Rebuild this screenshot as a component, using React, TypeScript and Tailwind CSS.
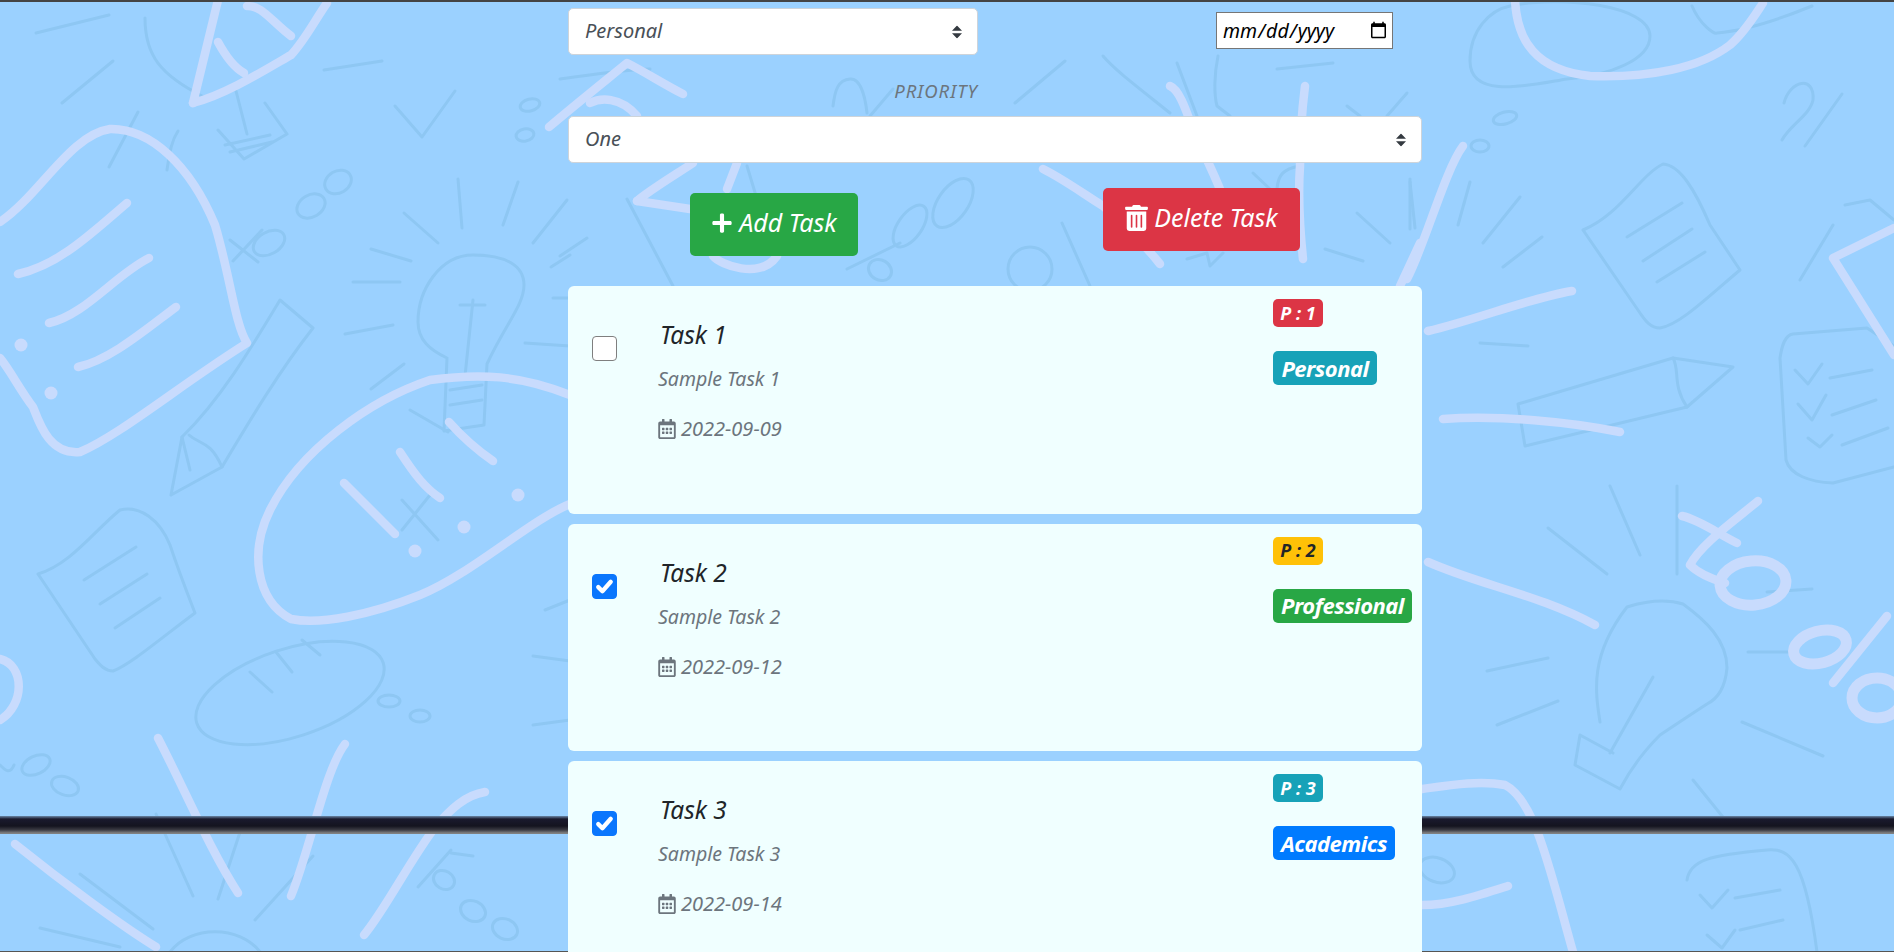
import React from "react";
import { FaPlus, FaTrashAlt, FaRegCalendarAlt } from "react-icons/fa";

const thick = [
  "M0 222 C40 195 70 135 110 129 C150 128 190 165 215 225 C230 275 235 325 247 343 C180 385 120 435 80 452 C50 455 40 425 33 407 C20 390 10 370 0 358",
  "M18 274 C60 265 95 230 127 203", "M49 323 C85 315 115 275 149 258", "M78 367 C110 360 145 330 176 307",
  "M193 103 L218 0", "M193 103 C225 95 265 70 291 55 C305 40 315 20 327 3", "M218 42 C225 55 235 68 244 73", "M247 6 C262 5 272 22 291 36",
  "M570 395 C520 375 480 373 430 380 C370 400 300 450 270 510 C250 550 255 600 291 619 C320 625 370 615 420 595 C470 575 530 520 570 504",
  "M344 483 L395 534", "M400 452 C415 475 425 488 440 498", "M449 422 C465 440 480 452 493 461",
  "M0 659 C25 665 25 705 0 720",
  "M158 738 C185 790 210 850 238 893", "M345 744 C325 770 310 850 291 896", "M485 792 C465 795 450 810 436 826 C410 860 385 910 364 935", "M15 844 C60 880 120 925 156 947",
  "M549 127 C575 105 600 85 627 63 C645 72 665 85 683 94", "M590 103 C600 98 620 96 637 116", "M637 201 C650 190 675 175 693 163", "M637 201 L690 209", "M737 163 L727 189", "M713 256 C720 265 760 280 777 256",
  "M1043 169 C1065 180 1085 195 1103 206 C1125 225 1145 245 1160 264",
  "M1170 86 C1180 90 1187 113 1195 135 C1205 155 1212 170 1220 189", "M1305 86 C1302 110 1300 140 1300 166 C1298 195 1300 230 1303 259", "M1420 243 L1400 286",
  "M1515 0 C1517 40 1535 70 1590 76 C1650 78 1700 68 1730 45 C1745 32 1755 15 1763 3",
  "M1463 146 C1445 170 1425 245 1407 279", "M1428 331 C1475 320 1530 298 1572 291", "M1443 419 C1500 415 1570 422 1620 432", "M1428 562 C1480 585 1540 595 1595 625",
  "M1682 516 C1700 520 1720 535 1737 543", "M1758 501 C1735 520 1700 545 1690 565 C1700 575 1715 580 1725 583",
  "M1894 228 L1833 258 L1894 355", "M1887 616 L1833 683",
  "M1422 789 C1450 785 1480 780 1505 785 C1535 800 1550 870 1573 952", "M1422 905 C1450 905 1480 895 1508 886",
];
const thickEllipses = [
  [1753, 583, 33, 22, -5], [1820, 647, 27, 16, -15], [1877, 698, 25, 20, 0],
];
const dots = [[21, 345], [51, 393], [415, 551], [464, 527], [518, 495]];
const thin = [
  "M145 18 C145 55 160 75 204 97", "M218 130 L244 159 L287 134 L265 103", "M236 91 L247 134", "M225 145 L270 135", "M230 152 L272 142",
  "M395 106 L422 137 L455 91", "M324 70 L382 61", "M36 33 L109 15", "M62 103 L113 61", "M109 167 L138 112", "M167 170 C170 150 172 140 178 131",
  "M233 261 L262 230", "M230 240 L258 262",
  "M171 495 L182 437 C220 400 250 350 280 300 L313 328 C280 370 250 420 222 467 L171 495", "M189 435 C200 445 210 440 222 467", "M182 437 L190 470",
  "M447 358 C430 350 418 340 418 322 C418 290 440 255 473 255 C505 255 524 265 524 285 C524 305 505 325 487 364 L484 425 L444 431 L447 358",
  "M473 300 L465 376", "M460 305 L485 305", "M450 390 L482 385", "M450 405 L482 400",
  "M458 179 L462 228", "M518 182 L503 225", "M404 213 L438 243", "M371 249 L411 261", "M353 282 L400 282", "M345 334 L393 325", "M371 389 L404 364",
  "M533 243 L567 200", "M551 267 L570 255", "M553 298 L570 298", "M525 343 L570 346",
  "M38 574 C70 565 95 530 120 510 C140 505 160 520 170 545 C180 575 190 600 195 613 C165 635 130 665 113 671 C105 671 100 665 95 659 Z",
  "M84 580 L136 547", "M100 604 L147 574", "M115 628 L160 598",
  "M156 814 L193 896", "M255 920 L313 856", "M218 899 L244 820", "M80 874 L153 929", "M40 928 L120 947", "M170 952 C190 925 240 925 260 952",
  "M418 887 L451 850", "M451 853 L473 856",
  "M533 656 L570 661", "M533 725 L570 720", "M545 610 L570 600",
  "M0 765 C5 770 10 775 14 765",
  "M560 79 C590 75 620 70 650 69", "M833 106 C835 90 838 80 850 79 C860 78 865 95 867 113", "M893 89 L870 116",
  "M627 199 L673 286", "M747 166 L760 209", "M560 256 L587 238", "M847 269 L900 243",
  "M1015 103 L1065 61", "M1103 56 C1115 70 1135 85 1170 113", "M1333 63 L1277 69", "M1177 63 L1197 116", "M1218 56 C1214 75 1214 95 1217 106 L1230 116",
  "M1407 93 L1387 116", "M1347 106 L1360 116", "M1253 173 L1270 189", "M1277 189 C1278 175 1283 169 1300 166", "M1357 213 L1390 243", "M1325 249 L1363 261", "M1410 179 L1410 229",
  "M1062 223 L1090 286", "M1187 259 L1207 253 L1210 266 L1223 253",
  "M1470 61 C1470 30 1490 10 1510 6 C1560 -5 1650 5 1650 36 C1650 60 1610 75 1567 79 C1530 85 1470 100 1470 61",
  "M1692 6 C1700 25 1715 35 1717 33 C1750 30 1790 15 1812 6", "M1784 103 C1790 80 1815 75 1813 100 C1810 115 1790 125 1782 140", "M1842 94 L1805 146",
  "M1583 230 C1620 215 1640 175 1663 164 C1680 165 1695 190 1710 225 L1740 270 C1710 295 1680 325 1660 328 C1650 328 1645 320 1640 313 Z",
  "M1627 237 L1682 203", "M1643 261 L1692 229", "M1657 282 L1705 252",
  "M1518 404 L1673 358 L1733 367 L1687 407 L1525 446 L1518 404", "M1673 358 C1680 370 1672 385 1687 407",
  "M1780 358 C1782 345 1785 335 1793 334 L1867 328 L1894 346 M1780 358 L1786 460 C1790 475 1810 482 1833 483 L1894 467",
  "M1795 370 L1808 384 L1822 364", "M1798 404 L1812 420 L1826 395", "M1808 438 L1820 447 L1832 435", "M1830 378 L1872 370", "M1832 415 L1876 400", "M1842 445 L1888 428",
  "M1800 280 L1833 225", "M1845 205 L1870 200 L1894 220",
  "M1600 722 C1595 690 1590 655 1627 607 C1650 600 1670 600 1683 604 C1705 620 1727 640 1727 668 C1725 690 1715 700 1707 704 C1690 715 1675 725 1660 735 C1645 750 1630 770 1620 789 L1575 765 L1580 735 L1613 753",
  "M1653 677 L1610 753",
  "M1610 486 L1640 555", "M1677 486 L1677 574", "M1548 528 L1607 574", "M1487 671 L1548 658", "M1497 725 L1558 701", "M1748 652 L1793 652", "M1742 722 L1823 756", "M1693 780 L1735 832", "M1767 592 L1812 589",
  "M1410 182 L1415 228", "M1470 182 L1458 225", "M1520 197 L1483 243", "M1542 237 L1503 267", "M1480 343 L1528 346",
  "M1687 880 C1690 860 1710 855 1767 850 C1790 848 1805 860 1817 952", "M1700 895 L1712 908 L1728 890", "M1735 898 L1780 890", "M1707 935 L1722 948 L1735 930", "M1740 930 L1783 920",
];
const thinEllipses = [
  [269, 243, 17, 11, -30], [311, 206, 15, 11, -30], [338, 182, 14, 11, -30],
  [290, 693, 98, 44, -18], [389, 701, 11, 6, 0], [420, 716, 10, 6, 0],
  [36, 765, 15, 9, -25], [65, 786, 14, 9, 20], [444, 880, 11, 9, 30], [473, 911, 13, 10, 25], [505, 929, 13, 10, 25],
  [953, 203, 15, 28, 35], [910, 226, 12, 24, 35], [880, 270, 12, 10, 30], [1030, 269, 22, 22, 0], [1505, 118, 12, 6, -15], [1480, 146, 9, 6, 0], [530, 105, 10, 6, -15], [525, 135, 9, 6, -10], [1437, 870, 18, 12, 20],
];
const thinDotted = [
  "M410 410 L448 432", "M402 500 L438 540 M434 490 L402 530", "M250 672 L272 692", "M276 652 L292 672", "M302 640 L320 655",
];

function Background() {
  return (
    <svg className="absolute inset-0 w-full h-full blur-[0.7px]" viewBox="0 0 1894 952" fill="none" strokeLinecap="round" strokeLinejoin="round">
      <g stroke="#8ec7f3" strokeWidth="3">
        {thin.concat(thinDotted).map((d, i) => <path key={i} d={d} />)}
        {thinEllipses.map(([x, y, rx, ry, r], i) => <ellipse key={i} cx={x} cy={y} rx={rx} ry={ry} transform={`rotate(${r} ${x} ${y})`} />)}
      </g>
      <g stroke="#c8dbfd" strokeWidth="8.5">
        {thick.map((d, i) => <path key={i} d={d} />)}
        {thickEllipses.map(([x, y, rx, ry, r], i) => <ellipse key={i} cx={x} cy={y} rx={rx} ry={ry} strokeWidth={11} transform={`rotate(${r} ${x} ${y})`} />)}
      </g>
      <g fill="#c8dbfd">
        {dots.map(([x, y], i) => <circle key={i} cx={x} cy={y} r="6.5" />)}
      </g>
    </svg>
  );
}

function Arrows() {
  return (
    <svg className="absolute right-[16px] top-1/2 -translate-y-1/2 w-[10px] h-[13px] pointer-events-none" viewBox="0 0 4 5" preserveAspectRatio="none">
      <path fill="#343a40" d="M2 0L0 2h4zm0 5L0 3h4z" />
    </svg>
  );
}

function Select({ value, widthClass }: { value: string; widthClass: string }) {
  return (
    <div className={`relative ${widthClass}`}>
      <select
        defaultValue={value}
        className="block w-full h-[47px] appearance-none bg-white border border-[#ced4da] rounded-[5px] pl-[16px] pb-[2px] text-[20px] italic text-[#495057] [font-family:'Noto_Sans',sans-serif]"
      >
        <option>{value}</option>
      </select>
      <Arrows />
    </div>
  );
}

type Task = { title: string; sub: string; date: string; checked: boolean; p: string; pCls: string; cat: string; catCls: string; catW: string };

const tasks: Task[] = [
  { title: "Task 1", sub: "Sample Task 1", date: "2022-09-09", checked: false, p: "P : 1", pCls: "bg-[#dc3545] text-white", cat: "Personal", catCls: "bg-[#17a2b8]", catW: "w-[104px]" },
  { title: "Task 2", sub: "Sample Task 2", date: "2022-09-12", checked: true, p: "P : 2", pCls: "bg-[#ffc107] text-[#212529]", cat: "Professional", catCls: "bg-[#28a745]", catW: "w-[139px]" },
  { title: "Task 3", sub: "Sample Task 3", date: "2022-09-14", checked: true, p: "P : 3", pCls: "bg-[#17a2b8] text-white", cat: "Academics", catCls: "bg-[#007bff]", catW: "w-[122px]" },
];

function TaskCard({ t }: { t: Task }) {
  return (
    <div className="flex shrink-0 h-[227.5px] bg-[#f0ffff] rounded-[6px] [font-family:'Noto_Sans',sans-serif] italic">
      <div className="relative ml-[24px] mt-[50px] w-[25px] h-[25px] shrink-0">
        <input
          type="checkbox"
          readOnly
          checked={t.checked}
          className="block appearance-none w-[25px] h-[25px] rounded-[4px] bg-white border border-[#7f7f7f] checked:bg-[#0a76fd] checked:border-[#0a76fd]"
        />
        {t.checked && (
          <svg className="absolute inset-0 w-[25px] h-[25px] pointer-events-none" viewBox="0 0 20 20" fill="none">
            <path d="M5 10.5l3.3 3.3 6.7-7.6" stroke="#fff" strokeWidth="3.4" strokeLinecap="round" strokeLinejoin="round" />
          </svg>
        )}
      </div>
      <div className="ml-[41px] flex-1 pt-[32px]">
        <div className="ml-[2px] text-[24.5px] leading-[34px] text-[#212529]">{t.title}</div>
        <div className="mt-[14px] text-[19.5px] leading-[26px] text-[#6c757d]">{t.sub}</div>
        <div className="mt-[24px] flex items-center text-[20px] leading-[26px] text-[#6c757d]">
          <FaRegCalendarAlt className="w-[18px] h-[20px] mr-[5px] not-italic" />
          <span>{t.date}</span>
        </div>
      </div>
      <div className="w-[149px] shrink-0 pt-[13px] flex flex-col items-start font-bold">
        <span className={`flex items-center justify-center w-[50px] h-[28px] rounded-[5px] text-[18px] ${t.pCls}`}>{t.p}</span>
        <span className={`mt-[24px] flex items-center justify-center h-[34px] rounded-[5px] text-[22px] tracking-[-0.5px] text-white ${t.catW} ${t.catCls}`}>{t.cat}</span>
      </div>
    </div>
  );
}

export default function App() {
  return (
    <div className="relative w-full h-[952px] overflow-hidden bg-[#9bd1ff]">
      <Background />
      <div className="absolute left-0 right-0 top-[816px] h-[18px] bg-[linear-gradient(to_bottom,#6a88a8_0px,#1a1a2e_3px,#14141f_10px,#3c3c44_14px,#808080_17px,#808080_18px)]" />
      <div className="absolute left-0 right-0 top-0 h-[2px] bg-[#444444]" />
      <div className="absolute left-0 right-0 bottom-0 h-[1px] bg-[#555555]" />
      <div className="relative ml-[568px] w-[854px] pt-[8px] flex flex-col">
        <div className="flex items-start">
          <Select value="Personal" widthClass="w-[410px]" />
          <input
            type="date"
            className="ml-[238px] mt-[4px] w-[177px] h-[37px] bg-white border border-[#767676] pl-[5px] pr-[2px] text-[19.5px] italic text-black [font-family:'Noto_Sans',sans-serif]"
          />
        </div>
        <div className="mt-[24px] w-[736px] text-center text-[18.5px] leading-[24px] tracking-[1px] italic text-[#6c757d] [font-family:'Noto_Sans',sans-serif]">PRIORITY</div>
        <div className="mt-[13px]"><Select value="One" widthClass="w-[854px]" /></div>
        <div className="flex items-start [font-family:'Noto_Sans',sans-serif] italic text-white text-[25px]">
          <button className="ml-[122px] mt-[30px] pb-[4px] flex items-center justify-center gap-[6px] w-[168px] h-[63px] rounded-[5px] bg-[#28a745] italic">
            <FaPlus className="w-[22px] h-[22px]" />
            <span>Add Task</span>
          </button>
          <button className="ml-[245px] mt-[25px] pb-[4px] flex items-center justify-center gap-[6px] w-[197px] h-[63px] rounded-[5px] bg-[#dc3545] italic">
            <FaTrashAlt className="w-[23px] h-[26px]" />
            <span>Delete Task</span>
          </button>
        </div>
        <div className="mt-[30px] flex flex-col gap-[10px]">
          {tasks.map((t) => <TaskCard key={t.title} t={t} />)}
        </div>
      </div>
    </div>
  );
}
